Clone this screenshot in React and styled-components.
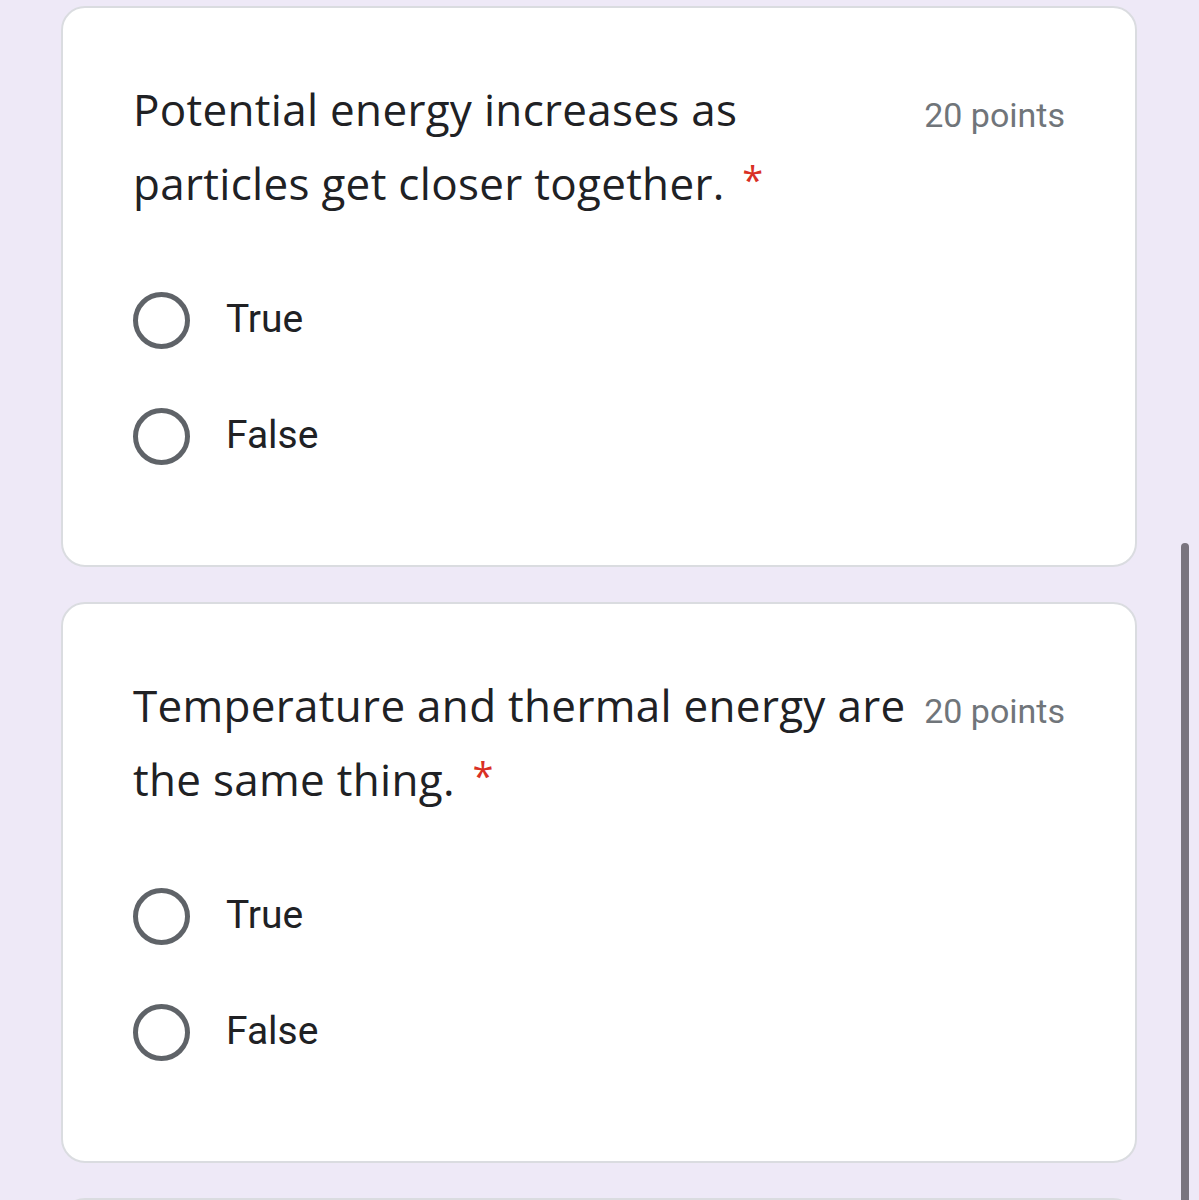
import React from 'react';
import styled, { createGlobalStyle } from 'styled-components';

const COLORS = {
	page: '#eee9f7',
	card: '#ffffff',
	border: '#dadce0',
	text: '#202124',
	muted: '#70757a',
	radio: '#5f6368',
	required: '#d93025',
	scroll: '#79747e',
};

const GlobalStyle = createGlobalStyle`
	html, body {
		margin: 0;
		padding: 0;
		background: ${COLORS.page};
	}
	body {
		font-family: 'Open Sans', 'Noto Sans', sans-serif;
		-webkit-font-smoothing: antialiased;
	}
`;

const QUESTIONS = [
	{
		id: 'q1',
		lines: ['Potential energy increases as', 'particles get closer together.'],
		points: 20,
	},
	{
		id: 'q2',
		lines: ['Temperature and thermal energy are', 'the same thing.'],
		points: 20,
	},
];

const OPTIONS = ['True', 'False'];

const Question = ({ lines, points }) => {
	return (
		<Card>
			<Header>
				<Title>
					{lines[0]}
					<br />
					{lines[1]} <Required>*</Required>
				</Title>
				<Points>{points} points</Points>
			</Header>
			<Options>
				{OPTIONS.map((option) => (
					<Option key={option}>
						<Radio />
						<Label>{option}</Label>
					</Option>
				))}
			</Options>
		</Card>
	);
};

const App = () => {
	return (
		<>
			<GlobalStyle />
			<Page>
				{QUESTIONS.map((q) => (
					<Question key={q.id} lines={q.lines} points={q.points} />
				))}
				<Card $stub />
			</Page>
			<Scrollbar />
		</>
	);
};

const Page = styled.main`
	display: flex;
	flex-direction: column;
	gap: 35px;
	padding: 6px 0 0 61px;
	width: 1076px;
	height: 1194px;
	overflow: hidden;
`;

const Card = styled.section`
	flex-shrink: 0;
	background: ${COLORS.card};
	border: 2px solid ${COLORS.border};
	border-radius: 24px;
	padding: 66px 70px 69px 70px;
	min-height: ${(p) => (p.$stub ? '200px' : 'auto')};
`;

const Header = styled.div`
	display: flex;
	align-items: flex-start;
	justify-content: space-between;
	gap: 18px;
`;

const Title = styled.h2`
	margin: 0;
	font-family: 'Open Sans', 'Noto Sans', sans-serif;
	font-weight: 400;
	font-size: 44px;
	line-height: 70px;
	letter-spacing: 0.3px;
	color: ${COLORS.text};
	white-space: nowrap;
`;

const Required = styled.span`
	color: ${COLORS.required};
	font-size: 38px;
	vertical-align: 6px;
	margin-left: 6px;
`;

const Points = styled.span`
	flex-shrink: 0;
	font-family: Roboto, 'Liberation Sans', sans-serif;
	font-size: 34px;
	line-height: 70px;
	margin-top: 6px;
	color: ${COLORS.muted};
`;

const Options = styled.div`
	display: flex;
	flex-direction: column;
	margin-top: 46px;
`;

const Option = styled.label`
	display: flex;
	align-items: center;
	height: 116px;
	gap: 36px;
`;

const Radio = styled.span`
	box-sizing: border-box;
	width: 57px;
	height: 57px;
	margin-top: -3px;
	border-radius: 50%;
	border: 5px solid ${COLORS.radio};
	flex-shrink: 0;
`;

const Label = styled.span`
	font-family: Roboto, 'Liberation Sans', sans-serif;
	font-size: 39px;
	margin-top: -6px;
	color: ${COLORS.text};
`;

const Scrollbar = styled.div`
	position: fixed;
	top: 543px;
	right: 10px;
	width: 8px;
	height: 700px;
	border-radius: 4px;
	background: ${COLORS.scroll};
`;

export default App;
